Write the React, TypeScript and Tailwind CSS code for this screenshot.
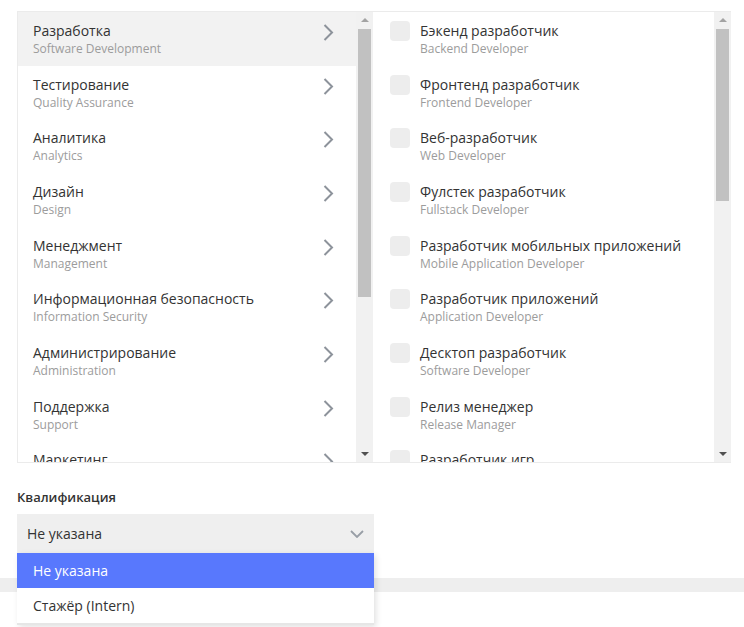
import React from "react";

const cats = [
  ["Разработка", "Software Development"],
  ["Тестирование", "Quality Assurance"],
  ["Аналитика", "Analytics"],
  ["Дизайн", "Design"],
  ["Менеджмент", "Management"],
  ["Информационная безопасность", "Information Security"],
  ["Администрирование", "Administration"],
  ["Поддержка", "Support"],
  ["Маркетинг", "Marketing"],
];

const roles = [
  ["Бэкенд разработчик", "Backend Developer"],
  ["Фронтенд разработчик", "Frontend Developer"],
  ["Веб-разработчик", "Web Developer"],
  ["Фулстек разработчик", "Fullstack Developer"],
  ["Разработчик мобильных приложений", "Mobile Application Developer"],
  ["Разработчик приложений", "Application Developer"],
  ["Десктоп разработчик", "Software Developer"],
  ["Релиз менеджер", "Release Manager"],
  ["Разработчик игр", "Game Developer"],
];

function Chevron() {
  return (
    <svg width="11" height="17" viewBox="0 0 11 17" className="shrink-0 mt-[3px]">
      <polyline points="1.5,1 9,8.5 1.5,16" fill="none" stroke="#8d939b" strokeWidth="2" />
    </svg>
  );
}

function Scrollbar({ thumb }: { thumb: number }) {
  return (
    <div className="w-[17px] shrink-0 bg-[#f1f1f1] flex flex-col items-center">
      <div className="h-[16px] w-full flex items-center justify-center">
        <svg width="8" height="4" viewBox="0 0 8 4">
          <polygon points="0,4 8,4 4,0" fill="#a3a3a3" />
        </svg>
      </div>
      <div className="mt-[1px] w-[13px] bg-[#c1c1c1]" style={{ height: thumb }} />
      <div className="flex-1" />
      <div className="h-[17px] w-full flex items-center justify-center">
        <svg width="8" height="4" viewBox="0 0 8 4">
          <polygon points="0,0 8,0 4,4" fill="#505050" />
        </svg>
      </div>
    </div>
  );
}

export default function App() {
  const font = { fontFamily: '"Open Sans", "Noto Sans", sans-serif' };
  return (
    <div className="relative w-[744px] h-[627px] overflow-hidden bg-white" style={font}>
      <div className="pt-[11px] pl-[17px]">
        <div className="flex w-[714px] h-[452px] border-t border-l border-b border-[#ebebeb]">
          <div className="w-[338px] shrink-0 overflow-hidden">
            {cats.map(([t, s], i) => (
              <div
                key={t}
                className={`h-[53.67px] flex items-start pt-[9px] pl-[15px] pr-[22px] ${i === 0 ? "bg-[#f2f2f2]" : ""}`}
              >
                <div className="flex-1">
                  <div className="text-[14px] leading-[20px] text-[#333333]">{t}</div>
                  <div className="text-[12px] leading-[16px] text-[#9c9c9c]">{s}</div>
                </div>
                <Chevron />
              </div>
            ))}
          </div>
          <Scrollbar thumb={268} />
          <div className="w-[341px] shrink-0 overflow-hidden">
            {roles.map(([t, s]) => (
              <div key={t} className="h-[53.67px] flex items-start pl-[17px] pt-[9px]">
                <div className="w-[20px] h-[20px] rounded-[4px] bg-[#ededed] shrink-0" />
                <div className="ml-[10px]">
                  <div className="text-[14px] leading-[20px] text-[#333333]">{t}</div>
                  <div className="text-[12px] leading-[16px] text-[#9c9c9c]">{s}</div>
                </div>
              </div>
            ))}
          </div>
          <Scrollbar thumb={172} />
        </div>
        <div className="mt-[24px] text-[13px] leading-[20px] font-semibold text-[#333333]">Квалификация</div>
        <div className="mt-[7px] w-[357px] h-[39px] bg-[#efefef] flex items-center justify-between pl-[10px] pr-[10px]">
          <span className="text-[14px] text-[#333333]">Не указана</span>
          <svg width="14" height="8" viewBox="0 0 14 8">
            <polyline points="1,1 7,7 13,1" fill="none" stroke="#989ea6" strokeWidth="1.8" />
          </svg>
        </div>
      </div>
      <div className="mt-[25px] h-[14px] w-full bg-[#eeeeee]" />
      <div className="absolute left-[17px] top-[553px] w-[357px] bg-white shadow-[2px_2px_6px_rgba(0,0,0,0.12)] border-b-2 border-[#e6e6e6]">
        <div className="h-[35px] bg-[#5878fd] flex items-center pl-[16px] text-[14px] text-white">Не указана</div>
        <div className="h-[35px] flex items-center pl-[16px] text-[14px] text-[#333333]">Стажёр (Intern)</div>
      </div>
    </div>
  );
}
